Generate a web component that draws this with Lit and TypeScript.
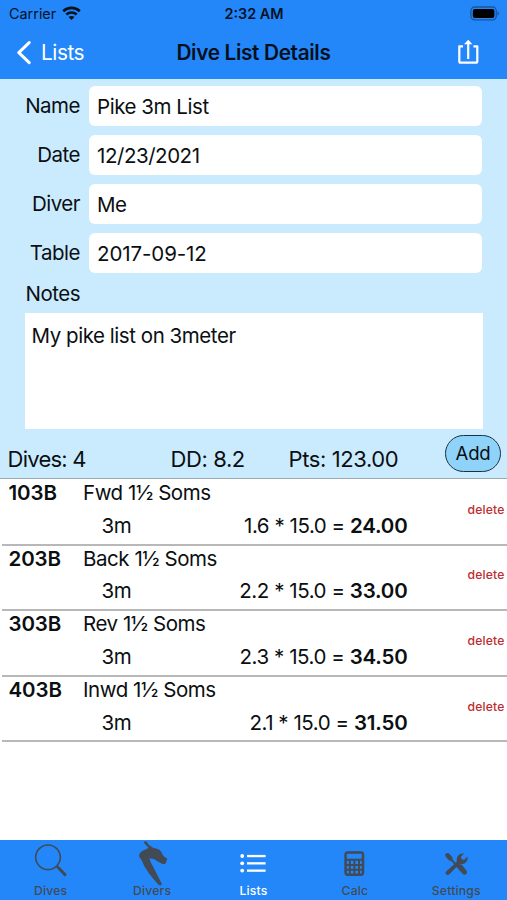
import { LitElement, html, css, svg } from "lit";
import { customElement, property } from "lit/decorators.js";

interface Dive {
  code: string;
  name: string;
  board: string;
  formula: string;
  points: string;
}

const FIELDS = [
  { label: "Name", value: "Pike 3m List" },
  { label: "Date", value: "12/23/2021" },
  { label: "Diver", value: "Me" },
  { label: "Table", value: "2017-09-12", wide: true },
];

const DIVES: Dive[] = [
  { code: "103B", name: "Fwd 1½ Soms", board: "3m", formula: "1.6 * 15.0 =", points: "24.00" },
  { code: "203B", name: "Back 1½ Soms", board: "3m", formula: "2.2 * 15.0 =", points: "33.00" },
  { code: "303B", name: "Rev 1½ Soms", board: "3m", formula: "2.3 * 15.0 =", points: "34.50" },
  { code: "403B", name: "Inwd 1½ Soms", board: "3m", formula: "2.1 * 15.0 =", points: "31.50" },
];

const ICONS = {
  dives: svg`
    <circle cx="14" cy="17.3" r="12.3" fill="none" stroke="currentColor" stroke-width="1.6"/>
    <path d="M22.4 26 L25 28.4" stroke="currentColor" stroke-width="2"/>
    <path d="M24.4 27.8 L31 34.6" stroke="currentColor" stroke-width="3" stroke-linecap="round"/>`,
  divers: svg`
    <path d="M9 2.8 C9 1.2 10.8 .8 12 2 L13.2 4.2 L17.6 7.6 L23.4 9.2 C25 9.8 26 11.4 27 13.4 L28.6 16.2 L32 18.4 C32.4 19.4 31.8 20.4 31.2 21.4 C31 23.4 29.6 24.6 27.6 24 L23.6 22 L18.8 18.9 L14.4 18.2 L15.6 22 L19 28.6 L22.8 36 L26.8 43.8 C26.8 45.2 25.2 45.8 23.8 45 L20.2 41 L14.4 34 L9.5 26.6 L6.8 20.4 L4.2 16.8 C3.8 14.4 4.8 12.4 7.2 11 L11.6 9 L13.6 7.8 L10.6 4.8 Z" fill="currentColor"/>`,
  lists: svg`
    <g fill="currentColor">
      <circle cx="6.2" cy="16" r="1.9"/><circle cx="6.2" cy="23.3" r="1.9"/><circle cx="6.2" cy="30.6" r="1.9"/>
      <rect x="11" y="14.9" width="18.6" height="2.3"/><rect x="11" y="22.2" width="18.6" height="2.3"/><rect x="11" y="29.5" width="18.6" height="2.3"/>
    </g>`,
  calc: svg`
    <rect x="7.6" y="12.4" width="17.4" height="22.4" rx="2.2" fill="none" stroke="currentColor" stroke-width="2.5"/>
    <path d="M8 19.8 H25 M8 25 H25 M8 29.8 H25 M11.8 20 V34 M16.4 20 V34 M21 20 V34" stroke="currentColor" stroke-width="2" fill="none"/>`,
  settings: svg`
    <g fill="currentColor">
      <path d="M6.4 14.2 C7.2 13 8.6 12.6 10 13.6 L13.2 17 L13.8 20 L15.8 22 L18.4 24.4 C20.4 23.8 22 24.2 23.4 25.6 L27.4 30.4 C28.4 31.8 28.2 33 27.2 34 C26.2 35 24.6 34.9 23.6 33.8 L18.6 28.2 L12.6 21.2 L9.8 20.2 L6.6 16.4 C6 15.6 6 14.9 6.4 14.2 Z"/>
      <path d="M7.2 31.4 L17.8 21.8 C17.2 18.8 18.2 16 20.4 14.6 C21.8 13.6 23.4 13.3 25 13.6 L22 16.7 L22.6 19.2 L25.2 19.8 L28.6 16.6 C29.1 19.8 27.8 22.4 25.4 23.6 C23.8 24.4 21.8 24.6 20.4 24.1 L10.4 34.2 C9.4 35.2 8 35.1 7.1 34.2 C6.2 33.3 6.2 32.3 7.2 31.4 Z"/>
    </g>`,
};

const TABS = [
  { label: "Dives", icon: ICONS.dives },
  { label: "Divers", icon: ICONS.divers },
  { label: "Lists", icon: ICONS.lists, active: true },
  { label: "Calc", icon: ICONS.calc },
  { label: "Settings", icon: ICONS.settings },
];

@customElement("dive-row")
export class DiveRow extends LitElement {
  @property({ attribute: false }) dive!: Dive;

  static styles = css`
    :host { display: block; padding-left: 2px; }
    .row {
      display: grid;
      grid-template-columns: 74.5px 1fr 97px;
      height: 65.6px;
      box-sizing: border-box;
      border-bottom: 2px solid #b8b8b8;
      padding: 0 2.5px 0 6.5px;
    }
    .code { font-weight: 600; letter-spacing: -0.1px; line-height: 25.8px; }
    .body { line-height: 25.8px; }
    .line { display: flex; justify-content: space-between; line-height: 39.4px; margin-bottom: -4px; padding-left: 18.5px; }
    .total { font-weight: 600; letter-spacing: -0.2px; }
    .delete { align-self: center; justify-self: end; color: #bd2c30; font-size: 12.2px; font-weight: 500; letter-spacing: .15px; line-height: 16px; padding-bottom: 4px; }
  `;

  render() {
    const d = this.dive;
    return html`<div class="row">
      <div class="code">${d.code}</div>
      <div class="body">
        <div>${d.name}</div>
        <div class="line"><span>${d.board}</span><span>${d.formula} <span class="total">${d.points}</span></span></div>
      </div>
      <div class="delete">delete</div>
    </div>`;
  }
}

@customElement("app-root")
export class AppRoot extends LitElement {
  static styles = css`
    :host {
      display: flex;
      flex-direction: column;
      width: 507px;
      height: 900px;
      background: #fff;
      color: #0b0f12;
      font: 400 20.5px Inter, "Liberation Sans", sans-serif;
      letter-spacing: -0.45px;
      overflow: hidden;
    }
    .top { background: #2387fa; height: 79px; flex: none; color: #06121f; }
    .status { display: grid; grid-template-columns: 1fr auto 1fr; align-items: center; height: 27px; padding: 0 7px 0 9px; font-size: 14.4px; letter-spacing: 0; }
    .carrier { display: flex; align-items: center; gap: 6px; }
    .time { font-weight: 600; margin-left: -1px; }
    .battery { justify-self: end; }
    .nav { display: grid; grid-template-columns: 1fr auto 1fr; align-items: center; height: 51px; padding: 0 16px; }
    .back { display: flex; align-items: center; gap: 10px; color: #fff; font-size: 20.8px; }
    .title { font-weight: 600; font-size: 20.8px; letter-spacing: -.35px; color: #05101c; }
    .share { justify-self: end; margin: 0 11.5px 1.5px 0; }
    svg { display: block; }
    .form { background: #caebfe; height: 400px; flex: none; box-sizing: border-box; border-bottom: 1.5px solid #9aa9b2; padding-top: 7px; }
    .field { display: grid; grid-template-columns: 80px 393.5px; column-gap: 8.5px; height: 40.4px; margin-bottom: 8.5px; }
    .label { text-align: right; line-height: 40px; letter-spacing: -.5px; }
    .value { background: #fff; border-radius: 6px; box-sizing: border-box; line-height: 39.4px; padding: 1px 0 0 8.5px; }
    .wide { letter-spacing: -.1px; }
    .notes-label { width: 80px; text-align: right; line-height: 24px; letter-spacing: -.5px; }
    .notes { background: #fff; height: 116px; box-sizing: border-box; margin: 7.5px 24px 0 25px; padding: 8px 6.5px; line-height: 30px; }
    .summary { display: grid; grid-template-columns: 163px 118px 1fr auto; padding: 6px 6px 0 7.5px; }
    .stat { line-height: 36px; padding-top: 6px; font-size: 22px; letter-spacing: -.4px; white-space: nowrap; }
    .stat:first-child { letter-spacing: -.75px; }
    .add { box-sizing: border-box; width: 56px; height: 37px; border: 1.5px solid #1b3340; border-radius: 19px; background: #8fd3fa; text-align: center; line-height: 34.5px; font-size: 18.6px; letter-spacing: -.2px; }
    .list { flex: 1; padding-top: 1px; }
    .tabs { flex: none; height: 60px; background: #2387fa; display: grid; grid-template-columns: repeat(5, 1fr); }
    .tab { display: flex; flex-direction: column; align-items: center; color: #414a55; font-size: 12.2px; font-weight: 500; letter-spacing: .2px; line-height: 14px; }
    .active { color: #fff; }
    .icon { width: 34px; height: 44px; overflow: visible; }
  `;

  render() {
    return html`
      <header class="top">
        <div class="status">
          <div class="carrier"><span>Carrier</span>
            <svg width="19" height="15" viewBox="0 0 19 15" fill="none" stroke="currentColor">
              <path d="M1.2 5.2 C5.8 .8 13.2 .8 17.8 5.2" stroke-width="2.6"/>
              <path d="M4.3 8.5 C7.2 5.8 11.8 5.8 14.7 8.5" stroke-width="2.5"/>
              <path d="M9.5 14 L6.5 11 C8.2 9.5 10.8 9.5 12.5 11 Z" fill="currentColor" stroke="none"/>
            </svg>
          </div>
          <div class="time">2:32 AM</div>
          <svg class="battery" width="30" height="15" viewBox="0 0 30 15">
            <rect x=".9" y="1" width="25.4" height="12.8" rx="3.8" fill="none" stroke="#1c5596" stroke-width="1.3"/>
            <rect x="2.8" y="2.9" width="21.6" height="9" rx="2" fill="#000"/>
            <path d="M27.6 5.2 C29.6 6 29.6 8.8 27.6 9.6 Z" fill="#1c5596"/>
          </svg>
        </div>
        <div class="nav">
          <div class="back">
            <svg width="15" height="24" viewBox="0 0 15 24"><path d="M13.2 1.6 L2.8 11.6 L13.2 21.6" fill="none" stroke="#fff" stroke-width="3" stroke-linecap="round" stroke-linejoin="round"/></svg>
            <span>Lists</span>
          </div>
          <div class="title">Dive List Details</div>
          <svg class="share" width="24" height="26" viewBox="0 0 24 26" fill="none" stroke="#fff" stroke-width="2.2">
            <path d="M7 7.3 H3.3 V22.2 Q3.3 23.7 4.8 23.7 H19.8 Q21.3 23.7 21.3 22.2 V7.3 H17.4" stroke-linejoin="round"/>
            <path d="M12.2 20 V3" /><path d="M8 5.2 L12.2 .8 L16.4 5.2 Z" fill="#fff" stroke="none"/>
          </svg>
        </div>
      </header>
      <section class="form">
        ${FIELDS.map((f) => html`<div class="field"><div class="label">${f.label}</div><div class="value ${f.wide ? "wide" : ""}">${f.value}</div></div>`)}
        <div class="notes-label">Notes</div>
        <div class="notes">My pike list on 3meter</div>
        <div class="summary">
          <div class="stat">Dives: 4</div>
          <div class="stat">DD: 8.2</div>
          <div class="stat">Pts: 123.00</div>
          <div class="add">Add</div>
        </div>
      </section>
      <main class="list">${DIVES.map((d) => html`<dive-row .dive=${d}></dive-row>`)}</main>
      <nav class="tabs">
        ${TABS.map((t) => html`<div class="tab ${t.active ? "active" : ""}"><svg class="icon" viewBox="0 0 34 44">${t.icon}</svg><span>${t.label}</span></div>`)}
      </nav>`;
  }
}
